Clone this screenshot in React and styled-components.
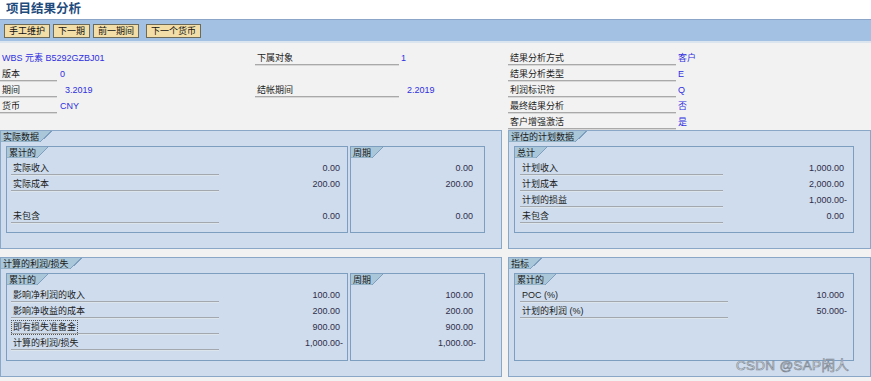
import styled, { createGlobalStyle } from "styled-components";

const GlobalStyle = createGlobalStyle`
  html, body {
    margin: 0;
    padding: 0;
    background: #f2f2f2;
  }
  body {
    font-family: "Liberation Sans", "Noto Sans CJK SC", sans-serif;
    font-size: 9px;
    color: #1c1c1c;
  }
`;

const buttons = ["手工维护", "下一期", "前一期间", "下一个货币"];

const actualRows = [
  { label: "实际收入", cum: "0.00", per: "0.00" },
  { label: "实际成本", cum: "200.00", per: "200.00" },
  null,
  { label: "未包含", cum: "0.00", per: "0.00" },
];

const planRows = [
  { label: "计划收入", cum: "1,000.00" },
  { label: "计划成本", cum: "2,000.00" },
  { label: "计划的损益", cum: "1,000.00-" },
  { label: "未包含", cum: "0.00" },
];

const calcRows = [
  { label: "影响净利润的收入", cum: "100.00", per: "100.00" },
  { label: "影响净收益的成本", cum: "200.00", per: "200.00" },
  { label: "即有损失准备金", cum: "900.00", per: "900.00", focus: true },
  { label: "计算的利润/损失", cum: "1,000.00-", per: "1,000.00-" },
];

const kpiRows = [
  { label: "POC (%)", cum: "10.000" },
  { label: "计划的利润 (%)", cum: "50.000-" },
];

const Amount = ({ value }) => {
  const neg = value.endsWith("-");
  return (
    <Value>
      {neg ? value.slice(0, -1) : value}
      <Sign>{neg ? "-" : ""}</Sign>
    </Value>
  );
};

const Tab = ({ children, outer }) => (
  <TabWrap $outer={outer}>
    <TabLabel>{children}</TabLabel>
    <TabSlant $outer={outer} />
  </TabWrap>
);

const Frame = ({ title, rows, field, width, labelWidth, padLeft, padRight, showLabels = true }) => (
  <FrameBox $w={width}>
    <Tab>{title}</Tab>
    <Rows>
      {rows.map((r, i) =>
        r ? (
          <Row key={i} $lw={showLabels ? labelWidth : 0} $pl={padLeft} $pr={padRight}>
            {showLabels && (
              <RowLabel>
                <LabelText $focus={r.focus}>{r.label}</LabelText>
              </RowLabel>
            )}
            <Amount value={r[field]} />
          </Row>
        ) : (
          <Row key={i} $lw={0} />
        )
      )}
    </Rows>
  </FrameBox>
);

const App = () => {
  return (
    <Page>
      <GlobalStyle />
      <TitleBar>项目结果分析</TitleBar>
      <Toolbar>
        {buttons.map((b, i) => (
          <ToolButton key={b} $spaced={i === 3}>
            {b}
          </ToolButton>
        ))}
      </Toolbar>

      <Header>
        <Column>
          <FieldRow>
            <BlueText $pad={2}>WBS 元素 B5292GZBJ01</BlueText>
          </FieldRow>
          <FieldRow>
            <FieldLabel $w={57}>版本</FieldLabel>
            <BlueText $pad={3}>0</BlueText>
          </FieldRow>
          <FieldRow>
            <FieldLabel $w={57}>期间</FieldLabel>
            <BlueText $pad={8}>3.2019</BlueText>
          </FieldRow>
          <FieldRow>
            <FieldLabel $w={57}>货币</FieldLabel>
            <BlueText $pad={3}>CNY</BlueText>
          </FieldRow>
        </Column>
        <Column>
          <FieldRow>
            <FieldLabel $w={144}>下属对象</FieldLabel>
            <BlueText $pad={2}>1</BlueText>
          </FieldRow>
          <FieldRow />
          <FieldRow>
            <FieldLabel $w={144}>结帐期间</FieldLabel>
            <BlueText $pad={8}>2.2019</BlueText>
          </FieldRow>
        </Column>
        <Column>
          <FieldRow>
            <FieldLabel $w={168}>结果分析方式</FieldLabel>
            <BlueText $pad={2}>客户</BlueText>
          </FieldRow>
          <FieldRow>
            <FieldLabel $w={168}>结果分析类型</FieldLabel>
            <BlueText $pad={2}>E</BlueText>
          </FieldRow>
          <FieldRow>
            <FieldLabel $w={168}>利润标识符</FieldLabel>
            <BlueText $pad={2}>Q</BlueText>
          </FieldRow>
          <FieldRow>
            <FieldLabel $w={168}>最终结果分析</FieldLabel>
            <BlueText $pad={2}>否</BlueText>
          </FieldRow>
          <FieldRow>
            <FieldLabel $w={168}>客户增强激活</FieldLabel>
            <BlueText $pad={2}>是</BlueText>
          </FieldRow>
        </Column>
      </Header>

      <Groups>
        <Group>
          <Tab outer>实际数据</Tab>
          <Frames>
            <Frame title="累计的" rows={actualRows} field="cum" width={342} labelWidth={208} padLeft={4} padRight={3} />
            <Frame title="周期" rows={actualRows} field="per" width={135} padRight={7} showLabels={false} />
          </Frames>
        </Group>
        <Group>
          <Tab outer>评估的计划数据</Tab>
          <Frames>
            <Frame title="总计" rows={planRows} field="cum" width={341} labelWidth={203} padLeft={5} padRight={5} />
          </Frames>
        </Group>
        <Group>
          <Tab outer>计算的利润/损失</Tab>
          <Frames>
            <Frame title="累计的" rows={calcRows} field="cum" width={342} labelWidth={208} padLeft={4} padRight={3} />
            <Frame title="周期" rows={calcRows} field="per" width={135} padRight={7} showLabels={false} />
          </Frames>
        </Group>
        <Group>
          <Tab outer>指标</Tab>
          <Frames>
            <Frame title="累计的" rows={kpiRows} field="cum" width={341} labelWidth={208} padLeft={5} padRight={5} />
          </Frames>
        </Group>
      </Groups>

      <Watermark>CSDN @SAP闲人</Watermark>
    </Page>
  );
};

export default App;

const Page = styled.div`
  position: relative;
  width: 871px;
  height: 381px;
  overflow: hidden;
  background: #f2f2f2;
`;

const TitleBar = styled.div`
  height: 19px;
  background: #fff;
  padding-left: 6px;
  font-size: 12.5px;
  font-weight: 700;
  line-height: 18px;
  color: #1f4b7d;
  box-sizing: border-box;
`;

const Toolbar = styled.div`
  height: 24px;
  box-sizing: border-box;
  border-top: 1px solid #8aa5c7;
  border-bottom: 2px solid #dbe5ef;
  background: #a3c1e3;
  display: flex;
  align-items: center;
  gap: 3px;
  padding-left: 4px;
`;

const ToolButton = styled.div`
  height: 14px;
  box-sizing: border-box;
  border: 1px solid #6e6a58;
  background: #f2dea6;
  padding: 0 4px;
  line-height: 12px;
  font-size: 9px;
  color: #111;
  margin-left: ${(p) => (p.$spaced ? "4px" : "0")};
`;

const Header = styled.div`
  display: grid;
  grid-template-columns: 255px 253px 1fr;
  padding: 7px 0 0;
  height: 87px;
  box-sizing: border-box;
`;

const Column = styled.div`
  display: flex;
  flex-direction: column;
`;

const FieldRow = styled.div`
  display: flex;
  height: 16px;
  align-items: flex-start;
`;

const FieldLabel = styled.div`
  width: ${(p) => p.$w}px;
  height: 15px;
  box-sizing: border-box;
  padding-left: 2px;
  line-height: 16px;
  border-bottom: 1px solid #a9a9a9;
  box-shadow: 0 1px 0 #d8d8d8;
  color: #1c1c1c;
`;

const BlueText = styled.div`
  padding-left: ${(p) => p.$pad}px;
  line-height: 16px;
  color: #2f2fe0;
`;

const Groups = styled.div`
  display: grid;
  grid-template-columns: 502px 363px;
  grid-template-rows: 119px 120px;
  column-gap: 6px;
  row-gap: 8px;
`;

const Group = styled.div`
  display: flex;
  flex-direction: column;
  border: 1px solid #8ba7c7;
  background: #cedced;
  padding: 0 16px 15px 5px;
  box-sizing: border-box;
`;

const TabWrap = styled.div`
  display: flex;
  height: 11px;
  margin-left: ${(p) => (p.$outer ? "-5px" : "0")};
  margin-bottom: ${(p) => (p.$outer ? "4px" : "2px")};
  align-self: flex-start;
`;

const TabLabel = styled.div`
  background: #a9c7d8;
  padding: 0 1px 0 2px;
  line-height: 12px;
  font-size: 9px;
  color: #1a1a1a;
  box-shadow: inset 0 -1px 0 #93b3c9;
`;

const TabSlant = styled.div`
  width: ${(p) => (p.$outer ? 12 : 11)}px;
  background: linear-gradient(
    to bottom right,
    #a9c7d8 calc(50% - 0.7px),
    #7f9fbf calc(50% - 0.7px),
    #7f9fbf calc(50% + 0.5px),
    transparent calc(50% + 0.5px)
  );
`;

const Frames = styled.div`
  flex: 1;
  display: flex;
  gap: 2px;
`;

const FrameBox = styled.div`
  width: ${(p) => p.$w}px;
  box-sizing: border-box;
  border: 1px solid #7e9ec0;
  display: flex;
  flex-direction: column;
`;

const Rows = styled.div`
  display: flex;
  flex-direction: column;
`;

const Row = styled.div`
  display: grid;
  grid-template-columns: ${(p) => (p.$lw ? `${p.$lw}px 1fr` : "1fr")};
  height: 16px;
  padding: 0 ${(p) => p.$pr || 0}px 0 ${(p) => p.$pl || 0}px;
`;

const RowLabel = styled.div`
  height: 15px;
  box-sizing: border-box;
  border-bottom: 1px solid #a2a8ae;
  box-shadow: 0 1px 0 #dde5ec;
  padding: 2px 0 0 1px;
  display: flex;
  align-items: center;
`;

const LabelText = styled.span`
  line-height: 13px;
  padding: 0 1px;
  color: #1c1c1c;
  outline: ${(p) => (p.$focus ? "1px dotted #555" : "none")};
`;

const Value = styled.div`
  display: flex;
  justify-content: flex-end;
  line-height: 17px;
  color: #302e4a;
`;

const Sign = styled.span`
  display: inline-block;
  width: 4px;
`;

const Watermark = styled.div`
  position: absolute;
  right: 22px;
  top: 354px;
  font-family: "Liberation Sans", "Noto Sans CJK SC", sans-serif;
  font-size: 13.5px;
  color: #f3f5f8;
  -webkit-text-stroke: 0.7px #7f8a96;
  letter-spacing: 0.3px;
`;
